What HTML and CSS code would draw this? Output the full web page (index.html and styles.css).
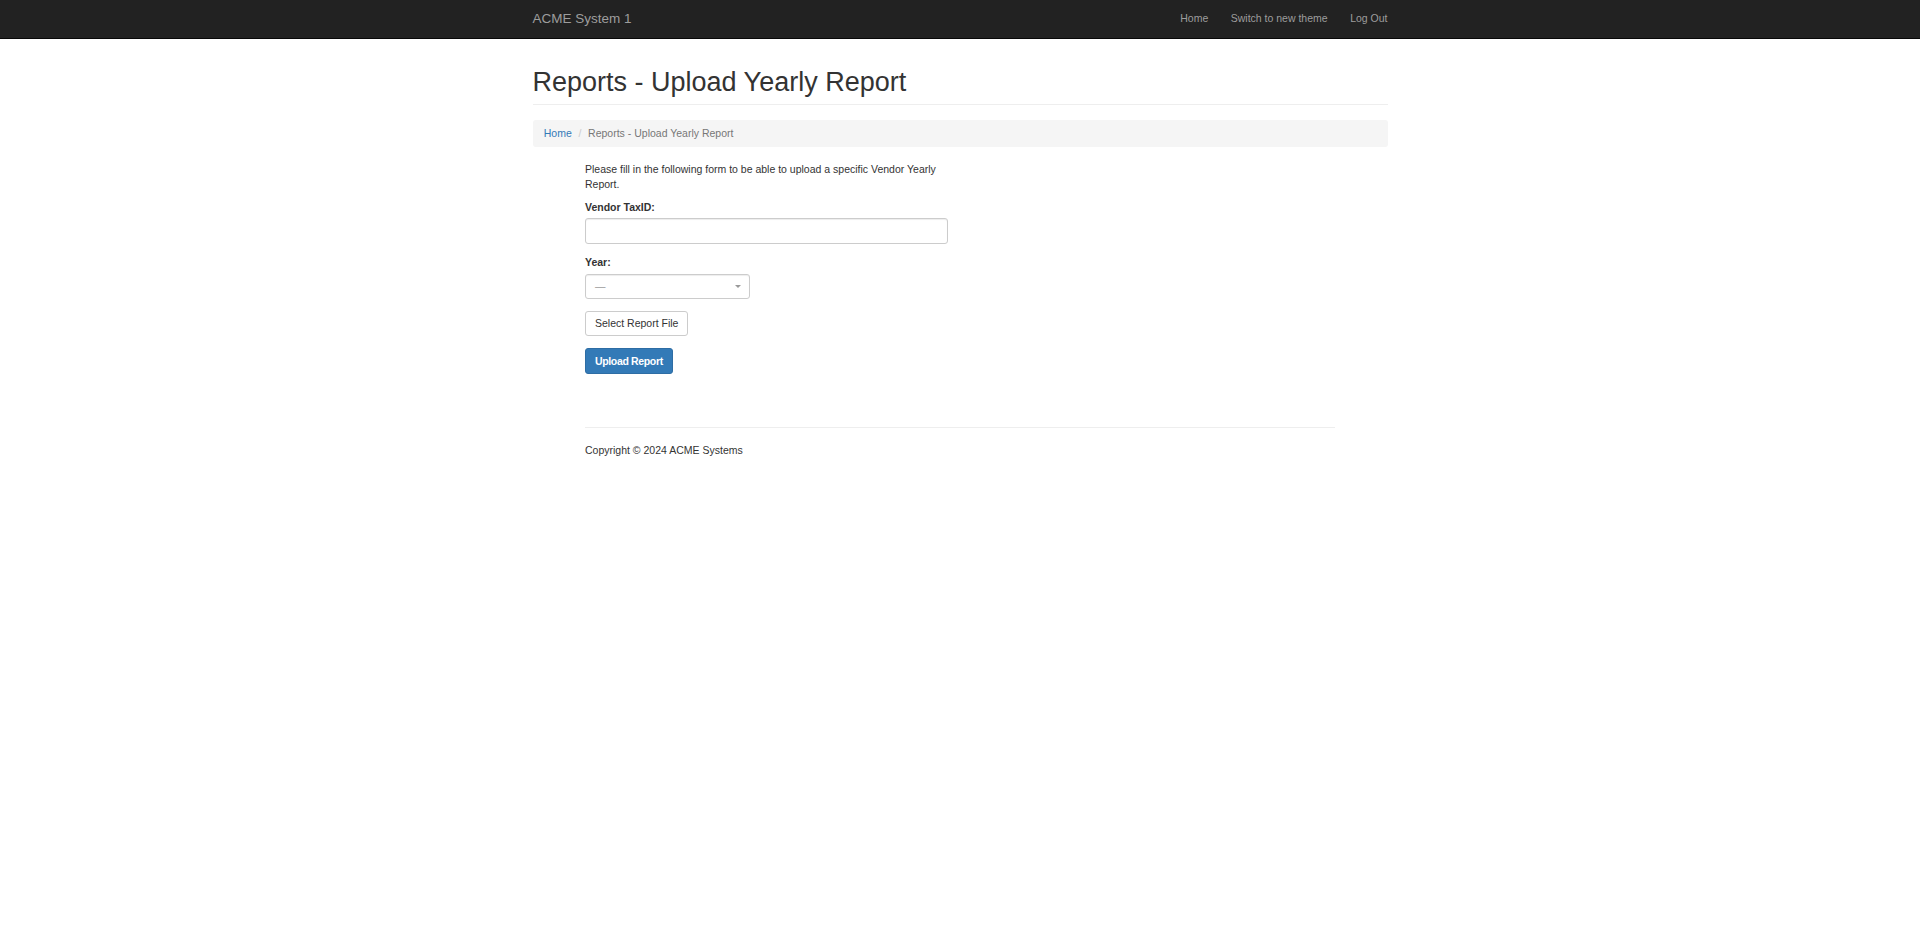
FILE: index.html
```html
<!DOCTYPE html>
<html lang="en">
<head>
<meta charset="utf-8">
<title>Reports - Upload Yearly Report</title>
<link rel="stylesheet" href="styles.css">
</head>
<body>
<nav class="navbar">
  <div class="container navbar-inner">
    <a class="brand" href="#">ACME System 1</a>
    <ul class="nav">
      <li><a href="#">Home</a></li>
      <li><a href="#">Switch to new theme</a></li>
      <li><a href="#">Log Out</a></li>
    </ul>
  </div>
</nav>
<div class="container">
  <div class="page-header">
    <h1>Reports - Upload Yearly Report</h1>
  </div>
  <ol class="breadcrumb">
    <li><a href="#">Home</a></li>
    <li class="active">Reports - Upload Yearly Report</li>
  </ol>
  <div class="body-content">
    <div class="form-col">
      <p class="intro">Please fill in the following form to be able to upload a specific Vendor Yearly Report.</p>
      <div class="form-group">
        <label class="label">Vendor TaxID:</label>
        <input class="form-control" type="text">
      </div>
      <div class="form-group">
        <label class="label">Year:</label>
        <div class="select">
          <span class="select-text">—</span>
          <span class="caret"></span>
        </div>
      </div>
      <div class="form-group file-group">
        <button class="btn btn-default" type="button">Select Report File</button>
      </div>
      <div class="form-group">
        <button class="btn btn-primary" type="button">Upload Report</button>
      </div>
    </div>
    <footer class="footer">
      <hr class="rule">
      <p class="copyright">Copyright © 2024 ACME Systems</p>
    </footer>
  </div>
</div>
</body>
</html>
```
FILE: styles.css
```css
* {
  box-sizing: border-box;
}

html, body {
  margin: 0;
  padding: 0;
  background: #fff;
}

body {
  font-family: "Liberation Sans", Arial, Helvetica, sans-serif;
  font-size: 10.5px;
  line-height: 15px;
  color: #333;
}

a {
  text-decoration: none;
}

.container {
  width: 877.5px;
  margin: 0 auto;
  padding: 0 11.25px;
}

/* Navbar */
.navbar {
  background: #222;
  border-bottom: 1px solid #080808;
  height: 38.5px;
}

.navbar-inner {
  display: flex;
  justify-content: space-between;
  align-items: flex-start;
}

.brand {
  display: block;
  font-size: 13.5px;
  line-height: 15px;
  padding: 11px 0;
  color: #9d9d9d;
}

.nav {
  display: flex;
  list-style: none;
  margin: 0 -11.25px 0 0;
  padding: 0;
}

.nav a {
  display: block;
  padding: 11.25px 11.25px;
  line-height: 15px;
  color: #9d9d9d;
}

/* Header */
.page-header {
  margin: 29.5px 0 15px;
  padding-bottom: 6.75px;
  border-bottom: 1px solid #eee;
}

.page-header h1 {
  margin: 0;
  font-size: 27px;
  font-weight: 500;
  line-height: 29.7px;
  color: #333;
}

/* Breadcrumb */
.breadcrumb {
  list-style: none;
  margin: 0 0 15px;
  padding: 6px 11.25px;
  background: #f5f5f5;
  border-radius: 3px;
  display: flex;
  gap: 3px;
}

.breadcrumb li {
  display: inline-block;
}

.breadcrumb li + li::before {
  content: "/\00a0";
  padding: 0 3.75px;
  color: #ccc;
}

.breadcrumb a {
  color: #337ab7;
}

.breadcrumb .active {
  color: #777;
}

/* Form */
.body-content {
  margin-left: 52.5px;
  width: 750px;
}

.form-col {
  width: 363px;
}

.intro {
  margin: 0 0 7.25px;
}

.form-group {
  margin-bottom: 11.25px;
}

.file-group {
  margin-bottom: 12.25px;
}

.label {
  display: inline-block;
  margin-bottom: 3.75px;
  font-weight: bold;
}

.form-control {
  display: block;
  width: 100%;
  height: 25.5px;
  padding: 4.5px 9px;
  font-family: inherit;
  font-size: 10.5px;
  color: #555;
  background: #fff;
  border: 1px solid #ccc;
  border-radius: 3px;
  box-shadow: inset 0 1px 1px rgba(0, 0, 0, 0.075);
  outline: none;
}

.select {
  width: 165px;
  height: 25.5px;
  border: 1px solid #ccc;
  border-radius: 3px;
  background: #fff;
  box-shadow: inset 0 1px 1px rgba(0, 0, 0, 0.075);
  display: flex;
  align-items: center;
  justify-content: space-between;
  padding: 0 8px 0 9px;
}

.select-text {
  color: #999;
  font-size: 10.5px;
}

.caret {
  width: 0;
  height: 0;
  border-left: 3px solid transparent;
  border-right: 3px solid transparent;
  border-top: 3px solid #999;
}

.btn {
  display: inline-block;
  height: 25.5px;
  padding: 4.5px 9px;
  font-family: inherit;
  font-size: 10.5px;
  line-height: 15px;
  border: 1px solid #ccc;
  border-radius: 3px;
  cursor: pointer;
}

.btn-default {
  background: #fff;
  color: #333;
}

.btn-primary {
  background: #337ab7;
  border-color: #2e6da4;
  color: #fff;
  font-weight: bold;
  letter-spacing: -0.35px;
}

/* Footer */
.footer {
  padding-top: 26.5px;
}

.rule {
  margin: 15px 0;
  border: 0;
  border-top: 1px solid #eee;
  height: 0;
}

.copyright {
  margin: 0 0 7.5px;
}
```
